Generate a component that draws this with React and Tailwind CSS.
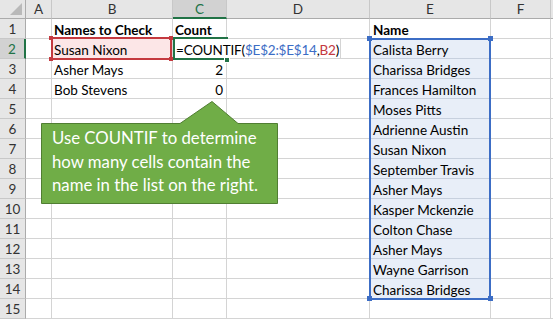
import React from "react";

const names = [
  "Calista Berry",
  "Charissa Bridges",
  "Frances Hamilton",
  "Moses Pitts",
  "Adrienne Austin",
  "Susan Nixon",
  "September Travis",
  "Asher Mays",
  "Kasper Mckenzie",
  "Colton Chase",
  "Asher Mays",
  "Wayne Garrison",
  "Charissa Bridges",
];

const colB = { 1: "Names to Check", 2: "Susan Nixon", 3: "Asher Mays", 4: "Bob Stevens" };
const colC = { 3: "2", 4: "0" };

function HeaderCell({ children, selected }) {
  return (
    <div
      className={
        selected
          ? "flex items-center justify-center border-r border-r-[#c8c8c8] border-b-2 border-b-[#217346] bg-[#d2d2d2] text-[13.5px] leading-[16px] text-[#217346]"
          : "flex items-center justify-center border-r border-r-[#c8c8c8] border-b border-b-[#ababab] bg-[#e6e6e6] text-[13.5px] leading-[16px] text-[#333]"
      }
    >
      {children}
    </div>
  );
}

function RowHeader({ n, selected }) {
  return (
    <div
      className={
        selected
          ? "flex items-end justify-center border-r-2 border-r-[#217346] border-b border-b-[#c8c8c8] bg-[#d2d2d2] text-[13.5px] leading-[17px] text-[#217346]"
          : "flex items-end justify-center border-r border-r-[#ababab] border-b border-b-[#c8c8c8] bg-[#e6e6e6] text-[13.5px] leading-[17px] text-[#333]"
      }
    >
      {n}
    </div>
  );
}

function Cell({ children, className = "" }) {
  return (
    <div
      className={
        "flex items-end overflow-visible whitespace-nowrap border-r border-b border-[#d4d4d4] px-[2px] text-[13.5px] leading-[16px] text-black " +
        className
      }
    >
      {children}
    </div>
  );
}

export default function App() {
  const rows = [];
  for (let r = 1; r <= 15; r++) {
    rows.push(<RowHeader key={"h" + r} n={r} selected={r === 2} />);
    rows.push(<Cell key={"a" + r} />);
    rows.push(
      <Cell
        key={"b" + r}
        className={(r === 1 ? "font-bold " : "") + (r === 2 ? "bg-[#fce6e7] " : "")}
      >
        {colB[r] || ""}
      </Cell>
    );
    if (r === 2) {
      rows.push(
        <Cell key={"c" + r} className="relative z-10 items-stretch border-r-transparent pl-[3px]">
          <span className="flex items-end border-r border-[#d4d4d4] bg-white pr-[1px] tracking-[-0.2px]">
            <span>
              =COUNTIF(<span className="text-[#3c6dc5]">$E$2:$E$14</span>,
              <span className="text-[#c4393f]">B2</span>)
            </span>
          </span>
        </Cell>
      );
    } else {
      rows.push(
        <Cell key={"c" + r} className={r === 1 ? "font-bold " : "justify-end pr-[3px] "}>
          {r === 1 ? "Count" : colC[r] || ""}
        </Cell>
      );
    }
    rows.push(<Cell key={"d" + r} />);
    if (r === 1) {
      rows.push(
        <Cell key={"e" + r} className="font-bold pl-[3px]">
          Name
        </Cell>
      );
    } else if (r <= 14) {
      rows.push(
        <Cell key={"e" + r} className="bg-[#e8eef8] border-b-[#c7d0de] pl-[3px]">
          {names[r - 2]}
        </Cell>
      );
    } else {
      rows.push(<Cell key={"e" + r} />);
    }
    rows.push(<Cell key={"f" + r} />);
    rows.push(<Cell key={"g" + r} className="border-r-0" />);
  }

  return (
    <div className="relative h-[319px] w-[553px] overflow-hidden bg-white font-[Lato,sans-serif]">
      <div className="grid grid-cols-[26px_26px_121px_54px_143px_121px_60px_1fr] grid-rows-[19px_repeat(15,20px)]">
        <div className="flex items-end justify-end border-r border-r-[#ababab] border-b border-b-[#ababab] bg-[#e6e6e6] pb-[3px] pr-[3px]">
          <svg width="12" height="12" viewBox="0 0 12 12">
            <polygon points="12,0 12,12 0,12" fill="#b9b9b9" />
          </svg>
        </div>
        <HeaderCell>A</HeaderCell>
        <HeaderCell>B</HeaderCell>
        <HeaderCell selected>C</HeaderCell>
        <HeaderCell>D</HeaderCell>
        <HeaderCell>E</HeaderCell>
        <HeaderCell>F</HeaderCell>
        <div className="border-b border-b-[#ababab] bg-[#e6e6e6]" />
        {rows}
      </div>

      {/* selection outlines and callout shape, drawn over the grid */}
      <svg
        className="pointer-events-none absolute left-0 top-0 z-20"
        width="553"
        height="319"
        viewBox="0 0 553 319"
      >
        <rect x="52" y="38" width="119" height="21" fill="none" stroke="#c4393f" strokeWidth="2" />
        <rect x="49" y="36" width="4" height="4" fill="#c4393f" />
        <rect x="169" y="36" width="4" height="4" fill="#c4393f" />
        <rect x="49" y="57" width="4" height="4" fill="#c4393f" />
        <rect x="169" y="57" width="4" height="4" fill="#c4393f" />

        <path d="M228 38 H174 V59 H228" fill="none" stroke="#217346" strokeWidth="2" />
        <rect x="224.5" y="57.5" width="5" height="5" fill="#217346" stroke="#ffffff" strokeWidth="1" />

        <rect x="370" y="39" width="120" height="260" fill="none" stroke="#3c6dc5" strokeWidth="2" />
        <rect x="367" y="36" width="5" height="5" fill="#3c6dc5" />
        <rect x="488" y="36" width="5" height="5" fill="#3c6dc5" />
        <rect x="367" y="296" width="5" height="5" fill="#3c6dc5" />
        <rect x="488" y="296" width="5" height="5" fill="#3c6dc5" />

        <path
          d="M41.5 123.5 H180 L212 101.5 L238 123.5 H277.5 V203.5 H41.5 Z"
          fill="#70ad47"
          stroke="#507e32"
          strokeWidth="1"
        />
      </svg>
      <div className="absolute left-[52px] top-[126px] z-30 whitespace-nowrap text-[16.75px] leading-[23.5px] text-white">
        <div>Use COUNTIF to determine</div>
        <div>how many cells contain the</div>
        <div>name in the list on the right.</div>
      </div>
    </div>
  );
}
